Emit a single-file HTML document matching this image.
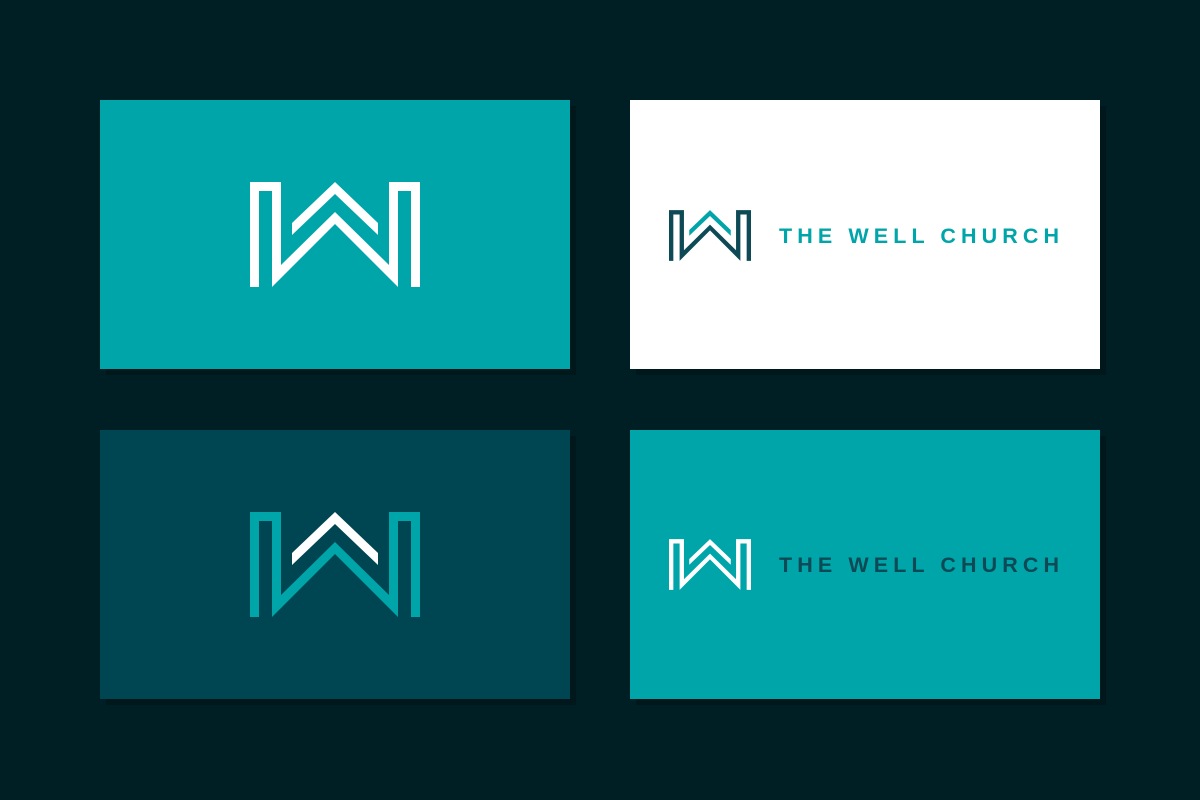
<!DOCTYPE html>
<html><head><meta charset="utf-8"><style>
html,body{margin:0;padding:0;width:1200px;height:800px;background:#001f25;overflow:hidden}
.c{position:absolute;width:470px;height:269px;box-shadow:6px 6px 0 rgba(0,0,0,0.25)}
.c svg{position:absolute}
.t{position:absolute;font-family:"Liberation Sans",sans-serif;font-weight:bold;font-size:21.5px;letter-spacing:5.1px;white-space:nowrap;line-height:1}
</style></head><body>
<div class="c" style="left:100px;top:100px;background:#00a5aa">
<svg style="left:150px;top:82px" width="170" height="105" viewBox="250 182 170 105">
<polygon fill="#fff" points="250,287 250,182 281,182 281,265 335,212 389,265 389,182 420,182 420,287 411,287 411,191 398,191 398,287 335,224 272,287 272,191 259,191 259,287"/>
<polygon fill="#fff" points="292,223 335,182 378,223 378,235 335,194 292,235"/>
</svg></div>
<div class="c" style="left:630px;top:100px;background:#fff">
<svg style="left:39px;top:110px" width="82" height="51" viewBox="250 182 170 105">
<polygon fill="#0d4a55" points="250,287 250,182 281,182 281,265 335,212 389,265 389,182 420,182 420,287 411,287 411,191 398,191 398,287 335,224 272,287 272,191 259,191 259,287"/>
<polygon fill="#00a5aa" points="292,223 335,182 378,223 378,235 335,194 292,235"/>
</svg>
<div class="t" style="left:149px;top:126px;color:#00a5aa">THE WELL CHURCH</div></div>
<div class="c" style="left:100px;top:430px;background:#004552">
<svg style="left:150px;top:82px" width="170" height="105" viewBox="250 182 170 105">
<polygon fill="#00a5aa" points="250,287 250,182 281,182 281,265 335,212 389,265 389,182 420,182 420,287 411,287 411,191 398,191 398,287 335,224 272,287 272,191 259,191 259,287"/>
<polygon fill="#fff" points="292,223 335,182 378,223 378,235 335,194 292,235"/>
</svg></div>
<div class="c" style="left:630px;top:430px;background:#00a5aa">
<svg style="left:39px;top:109px" width="82" height="51" viewBox="250 182 170 105">
<polygon fill="#fff" points="250,287 250,182 281,182 281,265 335,212 389,265 389,182 420,182 420,287 411,287 411,191 398,191 398,287 335,224 272,287 272,191 259,191 259,287"/>
<polygon fill="#fff" points="292,223 335,182 378,223 378,235 335,194 292,235"/>
</svg>
<div class="t" style="left:149px;top:125px;color:#0d4a55">THE WELL CHURCH</div></div>
</body></html>
